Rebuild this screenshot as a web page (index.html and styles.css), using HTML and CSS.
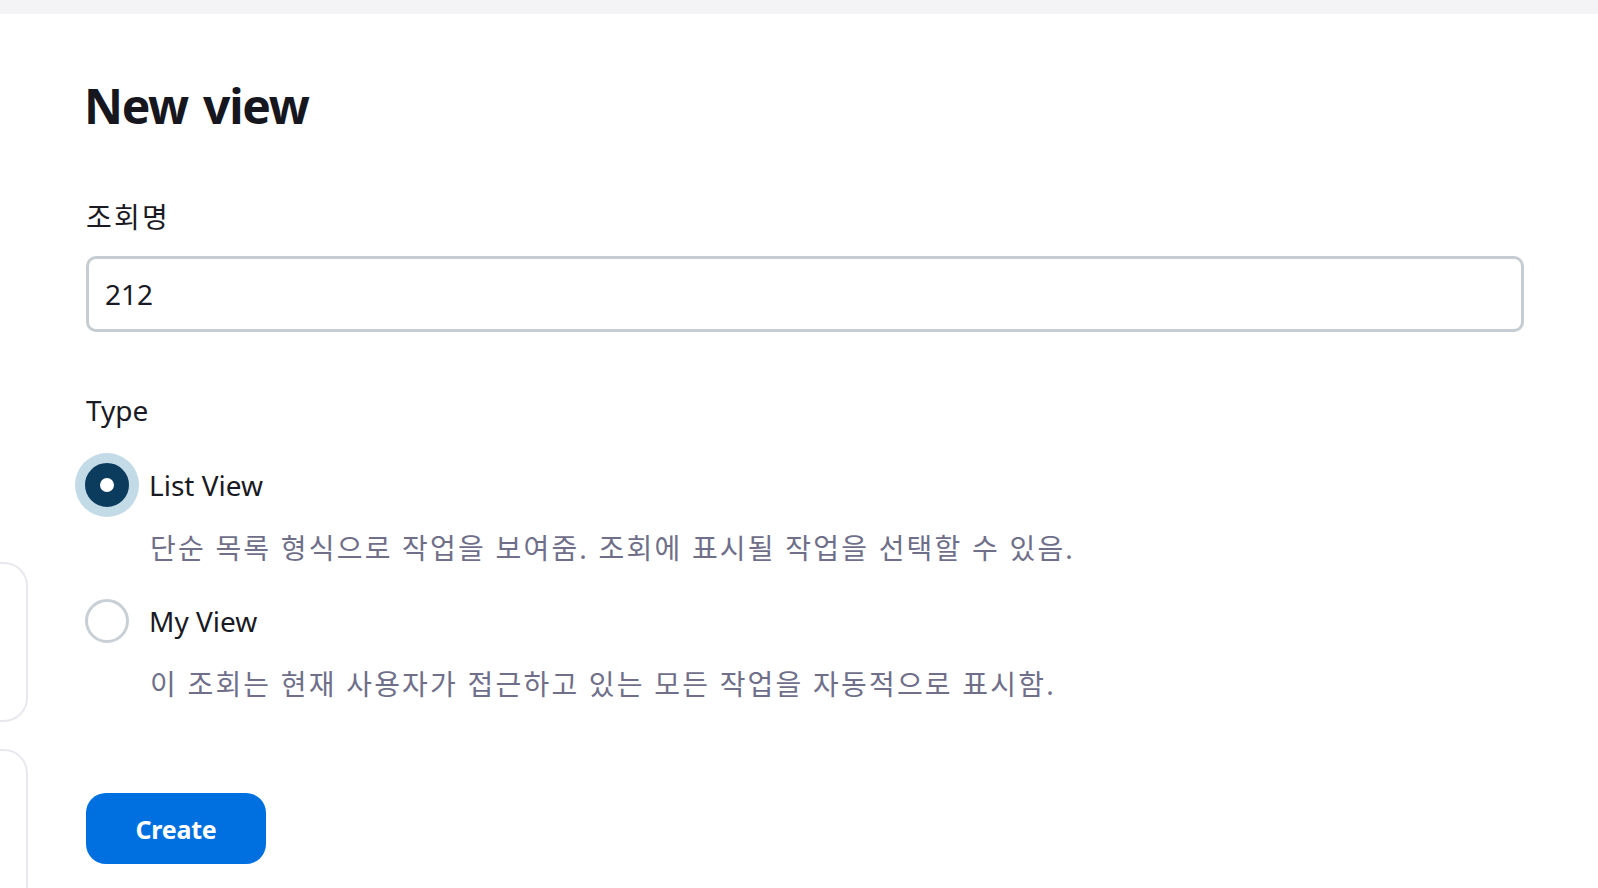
FILE: index.html
```html
<!DOCTYPE html>
<html lang="ko">
<head>
    <meta charset="UTF-8">
    <title>New view</title>
    <link rel="stylesheet" href="styles.css">
</head>
<body>
    <div class="topbar"></div>

    <div class="page">
        <div class="side">
            <div class="side-card first"></div>
            <div class="side-card second"></div>
        </div>

        <form class="view-form" onsubmit="event.preventDefault();">
            <h1>New view</h1>

            <label class="field-label ko" for="viewName">조회명</label>
            <input type="text" class="text-input" id="viewName" value="212">

            <div class="field-label type-label">Type</div>

            <label class="option">
                <input type="radio" name="viewType" value="list" checked>
                <span class="radio"></span>
                <span class="option-title">List View</span>
            </label>
            <p class="option-desc ko">단순 목록 형식으로 작업을 보여줌. 조회에 표시될 작업을 선택할 수 있음.</p>

            <label class="option">
                <input type="radio" name="viewType" value="my">
                <span class="radio"></span>
                <span class="option-title">My View</span>
            </label>
            <p class="option-desc ko">이 조회는 현재 사용자가 접근하고 있는 모든 작업을 자동적으로 표시함.</p>

            <button type="submit" class="create-btn">Create</button>
        </form>
    </div>
</body>
</html>
```

FILE: styles.css
```css
html, body {
    margin: 0;
    height: 100%;
    overflow: hidden;
}

body {
    font-family: "Noto Sans", "Noto Sans CJK KR", sans-serif;
    font-size: 28px;
    line-height: 42px;
    color: #1a1a24;
    background: white;
}

.ko {
    letter-spacing: 2.2px;
}

.topbar {
    height: 14px;
    background-color: #f4f4f6;
}

.page {
    display: flex;
}

/* cards of the panel behind, cut off by the window edge */
.side {
    width: 28px;
    flex-shrink: 0;
    overflow: hidden;
}

.side-card {
    width: 220px;
    margin-left: -192px;
    border: 2px solid #e8e8f0;
    border-radius: 24px;
    box-sizing: border-box;
}

.side-card.first {
    margin-top: 548px;
    height: 160px;
}

.side-card.second {
    margin-top: 27px;
    height: 220px;
}

.view-form {
    display: flex;
    flex-direction: column;
    align-items: flex-start;
    width: 1438px;
    margin-left: 58px;
    padding-top: 61px;
}

h1 {
    margin: 0 0 0 -2px;
    font-size: 48px;
    line-height: 62px;
    font-weight: 700;
    color: #16161f;
    letter-spacing: -1.3px;
    word-spacing: 4px;
}

.field-label {
    display: block;
    margin-top: 59px;
}

.text-input {
    display: block;
    width: 100%;
    height: 76px;
    margin-top: 18px;
    padding: 0 16px;
    box-sizing: border-box;
    border: 3px solid #c5cdd3;
    border-radius: 10px;
    font-family: inherit;
    font-size: 28px;
    color: #1a1a24;
    outline: none;
}

.type-label {
    margin-top: 57px;
}

.option {
    display: flex;
    align-items: center;
    height: 44px;
    margin-top: 32px;
    cursor: pointer;
}

.option-desc + .option {
    margin-top: 30px;
}

.option input {
    display: none;
}

.radio {
    width: 44px;
    height: 44px;
    margin-left: -1px;
    border: 3.5px solid #c8cfd5;
    border-radius: 50%;
    box-sizing: border-box;
    background: white;
}

.option input:checked + .radio {
    border: 15.5px solid #0b3c5e;
    box-shadow: 0 0 0 10px #c3dae7;
}

.option-title {
    margin-left: 20px;
}

.option-desc {
    margin: 20px 0 0 64px;
    color: #6f6f8a;
}

.create-btn {
    margin-top: 88px;
    width: 180px;
    height: 71px;
    border: none;
    border-radius: 20px;
    background-color: #0070e0;
    color: white;
    font-family: inherit;
    font-size: 25px;
    font-weight: 700;
    letter-spacing: -0.2px;
    cursor: pointer;
}

.create-btn:hover {
    background-color: #005fc0;
}
```
